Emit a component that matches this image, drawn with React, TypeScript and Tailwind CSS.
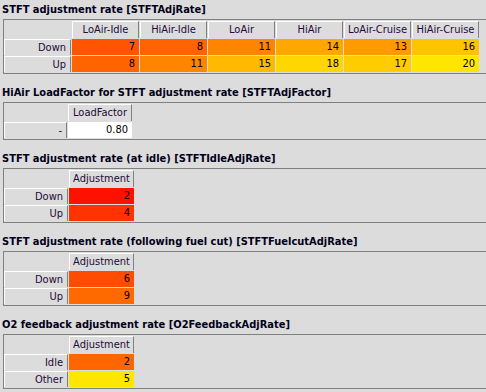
import React from 'react';

type Cell = { v: string; bg: string };
type Row = { label: string; cells: Cell[] };
type Table = {
  title: string;
  cols: string[];
  grid: string;
  rows: Row[];
};

const tables: Table[] = [
  {
    title: 'STFT adjustment rate [STFTAdjRate]',
    cols: ['LoAir-Idle', 'HiAir-Idle', 'LoAir', 'HiAir', 'LoAir-Cruise', 'HiAir-Cruise'],
    grid: 'grid-cols-[67px_repeat(6,67px)]',
    rows: [
      {
        label: 'Down',
        cells: [
          { v: '7', bg: 'bg-[#ff5500]' },
          { v: '8', bg: 'bg-[#ff6400]' },
          { v: '11', bg: 'bg-[#ff8400]' },
          { v: '14', bg: 'bg-[#ffa600]' },
          { v: '13', bg: 'bg-[#ff9a00]' },
          { v: '16', bg: 'bg-[#ffc400]' },
        ],
      },
      {
        label: 'Up',
        cells: [
          { v: '8', bg: 'bg-[#ff6400]' },
          { v: '11', bg: 'bg-[#ff8400]' },
          { v: '15', bg: 'bg-[#ffba00]' },
          { v: '18', bg: 'bg-[#ffd700]' },
          { v: '17', bg: 'bg-[#ffcc00]' },
          { v: '20', bg: 'bg-[#ffe600]' },
        ],
      },
    ],
  },
  {
    title: 'HiAir LoadFactor for STFT adjustment rate [STFTAdjFactor]',
    cols: ['LoadFactor'],
    grid: 'grid-cols-[63px_64px]',
    rows: [{ label: '-', cells: [{ v: '0.80', bg: 'bg-white' }] }],
  },
  {
    title: 'STFT adjustment rate (at idle) [STFTIdleAdjRate]',
    cols: ['Adjustment'],
    grid: 'grid-cols-[64px_65px]',
    rows: [
      { label: 'Down', cells: [{ v: '2', bg: 'bg-[#ff1100]' }] },
      { label: 'Up', cells: [{ v: '4', bg: 'bg-[#ff3300]' }] },
    ],
  },
  {
    title: 'STFT adjustment rate (following fuel cut) [STFTFuelcutAdjRate]',
    cols: ['Adjustment'],
    grid: 'grid-cols-[64px_65px]',
    rows: [
      { label: 'Down', cells: [{ v: '6', bg: 'bg-[#ff4c00]' }] },
      { label: 'Up', cells: [{ v: '9', bg: 'bg-[#ff6a00]' }] },
    ],
  },
  {
    title: 'O2 feedback adjustment rate [O2FeedbackAdjRate]',
    cols: ['Adjustment'],
    grid: 'grid-cols-[64px_65px]',
    rows: [
      { label: 'Idle', cells: [{ v: '2', bg: 'bg-[#ff6600]' }] },
      { label: 'Other', cells: [{ v: '5', bg: 'bg-[#ffe600]' }] },
    ],
  },
];

const hdr =
  'h-[17px] leading-[15px] text-center text-[#240a38] border-t border-l border-r border-t-white border-l-white border-r-[#808080] bg-[#dcdcdc]';
const lbl =
  'h-[16px] leading-[15px] text-right pr-[4px] text-[#240a38] border-t border-l border-r border-t-white border-l-white border-r-[#808080] bg-[#dcdcdc]';

function Section({ t, first }: { t: Table; first: boolean }) {
  return (
    <div className={first ? '' : 'mt-[9px]'}>
      <div className="h-[19px] leading-[19px] pl-[2px] font-bold text-[11px] text-[#000018] whitespace-nowrap">
        {t.title}
      </div>
      <div className="ml-[3px] border-t border-l border-b border-[#808080] pt-[1px] pb-[1px]">
        <div className={`grid ${t.grid} gap-[1px] w-max text-[11px]`}>
          <div className="h-[17px]" />
          {t.cols.map(c => (
            <div key={c} className={hdr}>
              {c}
            </div>
          ))}
          {t.rows.map(r => (
            <React.Fragment key={r.label}>
              <div className={lbl}>{r.label}</div>
              {r.cells.map((c, i) => (
                <div key={i} className={`h-[16px] leading-[16px] text-right pr-[4px] text-black ${c.bg}`}>
                  {c.v}
                </div>
              ))}
            </React.Fragment>
          ))}
        </div>
      </div>
    </div>
  );
}

export default function App() {
  return (
    <div
      className="w-[486px] h-[392px] overflow-hidden bg-[#dcdcdc]"
      style={{ fontFamily: '"DejaVu Sans Condensed", "DejaVu Sans", sans-serif' }}
    >
      {tables.map((t, i) => (
        <Section key={t.title} t={t} first={i === 0} />
      ))}
    </div>
  );
}
